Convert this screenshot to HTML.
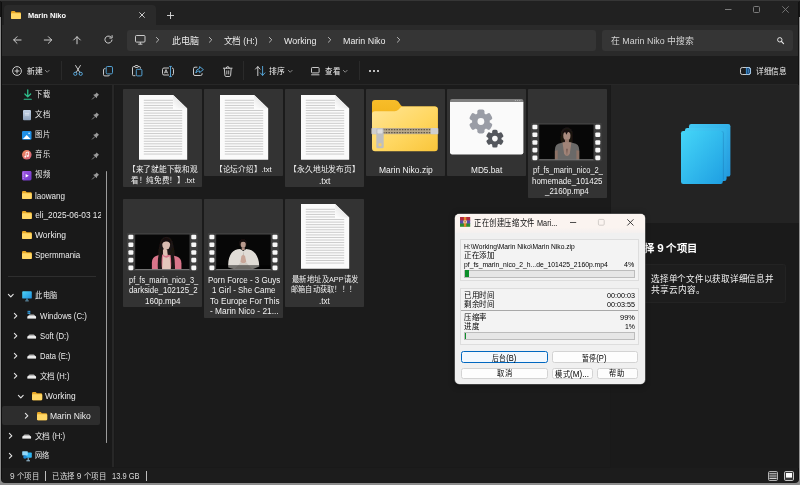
<!DOCTYPE html>
<html lang="zh-CN">
<head>
<meta charset="utf-8">
<title>Marin Niko</title>
<style>
*{box-sizing:border-box;margin:0;padding:0}
html,body{width:800px;height:485px;overflow:hidden;background:#191919}
body{font-family:"Liberation Sans",sans-serif;font-size:8px;color:#e6e6e6;position:relative}
.t{position:absolute;white-space:nowrap;transform-origin:0 50%;display:block}
svg{display:block;overflow:visible}
#w{position:absolute;left:0;top:0;width:800px;height:485px;overflow:hidden;will-change:transform}
.L{font-size:1.13em}

</style>
</head>
<body>
<div id="w">
<div style="position:absolute;left:0px;top:0px;width:800px;height:25px;background:#212121;"></div>
<div style="position:absolute;left:0px;top:0px;width:800px;height:1px;background:#363636;"></div>
<div style="position:absolute;left:0px;top:24.5px;width:800px;height:31.5px;background:#2a2a2a;"></div>
<div style="position:absolute;left:4.3px;top:4.6px;width:152px;height:21px;background:#2a2a2a;border-radius:4px 4px 0 0;"></div>
<div style="position:absolute;left:0px;top:56px;width:800px;height:28px;background:#1c1c1c;"></div>
<div style="position:absolute;left:0px;top:83.7px;width:800px;height:1.5px;background:#272727;"></div>
<svg style="position:absolute;left:11px;top:11px;" width="10" height="8" viewBox="0 0 10 8"><path d="M0 1.2Q0 0 1.2 0H3.6L4.8 1.3H8.8Q10 1.3 10 2.5V7Q10 8 9 8H1Q0 8 0 7Z" fill="#e8a827"/><path d="M0 2.9Q0 2.3 .8 2.3H9.2Q10 2.3 10 2.9V7Q10 8 9 8H1Q0 8 0 7Z" fill="#ffd767"/></svg>
<span id="t1" class="t" style="left:27.50px;top:9.60px;font-size:7.8px;color:#ffffff;line-height:12px;font-weight:bold;transform:scaleX(0.9534);">Marin Niko</span>
<svg style="position:absolute;left:139px;top:12px;" width="6" height="6" viewBox="0 0 6 6"><path d="M.3 .3L5.7 5.7M5.7 .3L.3 5.7" stroke="#dcdcdc" stroke-width=".9" fill="none"/></svg>
<svg style="position:absolute;left:167px;top:12px;" width="7" height="7" viewBox="0 0 7 7"><path d="M3.5 0V7M0 3.5H7" stroke="#dcdcdc" stroke-width=".9" fill="none"/></svg>
<svg style="position:absolute;left:725px;top:9px;" width="7" height="1" viewBox="0 0 7 1"><path d="M0 .5H6.5" stroke="#7c7c7c" stroke-width="1"/></svg>
<svg style="position:absolute;left:753px;top:6px;" width="7" height="7" viewBox="0 0 7 7"><rect x=".5" y=".5" width="6" height="6" rx="1" fill="none" stroke="#7c7c7c" stroke-width="1"/></svg>
<svg style="position:absolute;left:781.5px;top:6px;" width="7" height="7" viewBox="0 0 7 7"><path d="M.3 .3L6.7 6.7M6.7 .3L.3 6.7" stroke="#7c7c7c" stroke-width=".9" fill="none"/></svg>
<svg style="position:absolute;left:13.4px;top:35.6px;" width="8.4" height="8" viewBox="0 0 8.4 8"><path d="M8.1 4H.8M4 .7L.7 4L4 7.3" stroke="#d8d8d8" stroke-width=".95" fill="none" stroke-linecap="round" stroke-linejoin="round"/></svg>
<svg style="position:absolute;left:43.6px;top:35.6px;" width="8.4" height="8" viewBox="0 0 8.4 8"><path d="M.3 4H7.6M4.4 .7L7.7 4L4.4 7.3" stroke="#d8d8d8" stroke-width=".95" fill="none" stroke-linecap="round" stroke-linejoin="round"/></svg>
<svg style="position:absolute;left:73.3px;top:35.9px;" width="8" height="8" viewBox="0 0 8 8"><path d="M4 7.8V.8M.7 4L4 .7L7.3 4" stroke="#d8d8d8" stroke-width=".95" fill="none" stroke-linecap="round" stroke-linejoin="round"/></svg>
<svg style="position:absolute;left:103.5px;top:35.4px;" width="9" height="9" viewBox="0 0 9 9"><path d="M8 5A3.55 3.55 0 1 1 6.6 1.7" stroke="#d8d8d8" stroke-width=".95" fill="none" stroke-linecap="round"/><path d="M8.1 .6V3H5.7" stroke="#d8d8d8" stroke-width=".95" fill="none" stroke-linecap="round" stroke-linejoin="round"/></svg>
<div style="position:absolute;left:126.5px;top:29.5px;width:469.5px;height:21px;background:#353535;border-radius:3px;"></div>
<div style="position:absolute;left:601.5px;top:29.5px;width:191px;height:21px;background:#353535;border-radius:3px;"></div>
<svg style="position:absolute;left:134.5px;top:35px;" width="11" height="10" viewBox="0 0 11 10"><rect x=".5" y=".5" width="9.5" height="6.6" rx="1" fill="none" stroke="#dcdcdc" stroke-width=".9"/><path d="M3.2 9.2H7.4M5.3 7.2V9.2" stroke="#dcdcdc" stroke-width=".9" fill="none"/></svg>
<svg style="position:absolute;left:156.4px;top:37.4px;" width="3.2" height="5.6" viewBox="0 0 3.2 5.6"><path d="M.4 .4L2.8 2.8L.4 5.2" stroke="#cfcfcf" stroke-width="0.85" fill="none" stroke-linecap="round" stroke-linejoin="round"/></svg>
<svg style="position:absolute;left:209.4px;top:37.4px;" width="3.2" height="5.6" viewBox="0 0 3.2 5.6"><path d="M.4 .4L2.8 2.8L.4 5.2" stroke="#cfcfcf" stroke-width="0.85" fill="none" stroke-linecap="round" stroke-linejoin="round"/></svg>
<svg style="position:absolute;left:268.9px;top:37.4px;" width="3.2" height="5.6" viewBox="0 0 3.2 5.6"><path d="M.4 .4L2.8 2.8L.4 5.2" stroke="#cfcfcf" stroke-width="0.85" fill="none" stroke-linecap="round" stroke-linejoin="round"/></svg>
<svg style="position:absolute;left:327.9px;top:37.4px;" width="3.2" height="5.6" viewBox="0 0 3.2 5.6"><path d="M.4 .4L2.8 2.8L.4 5.2" stroke="#cfcfcf" stroke-width="0.85" fill="none" stroke-linecap="round" stroke-linejoin="round"/></svg>
<svg style="position:absolute;left:397.4px;top:37.4px;" width="3.2" height="5.6" viewBox="0 0 3.2 5.6"><path d="M.4 .4L2.8 2.8L.4 5.2" stroke="#cfcfcf" stroke-width="0.85" fill="none" stroke-linecap="round" stroke-linejoin="round"/></svg>
<span id="t2" class="t" style="left:172.00px;top:34.60px;font-size:9px;color:#ececec;line-height:12px;">此电脑</span>
<span id="t3" class="t" style="left:224.00px;top:34.60px;font-size:9px;color:#ececec;line-height:12px;transform:scaleX(0.9437);">文档 (H:)</span>
<span id="t4" class="t" style="left:283.75px;top:34.60px;font-size:9px;color:#ececec;line-height:12px;transform:scaleX(0.9891);">Working</span>
<span id="t5" class="t" style="left:343.00px;top:34.60px;font-size:9px;color:#ececec;line-height:12px;transform:scaleX(0.9880);">Marin Niko</span>
<span id="t6" class="t" style="left:610.80px;top:34.80px;font-size:9px;color:#d4d4d4;line-height:12px;transform:scaleX(0.9855);">在 Marin Niko 中搜索</span>
<svg style="position:absolute;left:776.5px;top:36.8px;" width="7" height="7" viewBox="0 0 7 7"><circle cx="2.8" cy="2.8" r="2.2" fill="none" stroke="#e4e4e4" stroke-width="1"/><path d="M4.5 4.5L6.6 6.6" stroke="#e4e4e4" stroke-width="1.1" stroke-linecap="round"/></svg>
<svg style="position:absolute;left:12px;top:66px;" width="10" height="10" viewBox="0 0 10 10"><circle cx="5" cy="5" r="4.4" fill="none" stroke="#dedede" stroke-width=".9"/><path d="M5 2.6V7.4M2.6 5H7.4" stroke="#dedede" stroke-width=".9"/></svg>
<span id="t7" class="t" style="left:27.00px;top:65.50px;font-size:8px;color:#f0f0f0;line-height:12px;transform:scaleX(0.9688);">新建</span>
<svg style="position:absolute;left:45px;top:70px;" width="4.4799999999999995" height="2.5600000000000005" viewBox="0 0 5.6 3.2"><path d="M.4 .4L2.8 2.8L5.2 .4" stroke="#bdbdbd" stroke-width="0.85" fill="none" stroke-linecap="round" stroke-linejoin="round"/></svg>
<div style="position:absolute;left:60.5px;top:61px;width:1px;height:19px;background:#2a2a2a;"></div>
<svg style="position:absolute;left:72.5px;top:65px;" width="10" height="11" viewBox="0 0 10 11"><path d="M2.6 .5L6.9 7.6M7.4 .5L3.1 7.6" stroke="#dedede" stroke-width=".9" fill="none" stroke-linecap="round"/><circle cx="2.3" cy="8.8" r="1.6" fill="none" stroke="#5ab0e6" stroke-width=".9"/><circle cx="7.7" cy="8.8" r="1.6" fill="none" stroke="#5ab0e6" stroke-width=".9"/></svg>
<svg style="position:absolute;left:102.5px;top:65.5px;" width="10" height="10.5" viewBox="0 0 10 10.5"><rect x="3.2" y=".5" width="6.3" height="7.4" rx="1.3" fill="none" stroke="#5ab0e6" stroke-width=".9"/><path d="M2.4 2.6H1.8Q.5 2.6 .5 3.9V8.6Q.5 9.9 1.8 9.9H5.2Q6.5 9.9 6.5 8.9" fill="none" stroke="#dedede" stroke-width=".9"/></svg>
<svg style="position:absolute;left:132px;top:65px;" width="10.5" height="11.5" viewBox="0 0 10.5 11.5"><path d="M3 1.6H1.6Q.5 1.6 .5 2.7V9.6Q.5 10.7 1.6 10.7H3.4" fill="none" stroke="#dedede" stroke-width=".9"/><path d="M6 1.6H7.4Q8.4 1.6 8.4 2.6V3.6" fill="none" stroke="#dedede" stroke-width=".9"/><rect x="2.9" y=".5" width="3.2" height="2" rx=".8" fill="none" stroke="#dedede" stroke-width=".9"/><rect x="4.3" y="4.3" width="5.6" height="6.6" rx="1" fill="none" stroke="#5ab0e6" stroke-width=".9"/></svg>
<svg style="position:absolute;left:161.5px;top:65.5px;" width="12" height="11" viewBox="0 0 12 11"><path d="M7 2H2Q.5 2 .5 3.5V7.5Q.5 9 2 9H7" fill="none" stroke="#dedede" stroke-width=".9"/><path d="M10 2Q11.5 2 11.5 3.5V7.5Q11.5 9 10 9" fill="none" stroke="#dedede" stroke-width=".9"/><path d="M8.5 .4V10.6M7.2 .4H9.8M7.2 10.6H9.8" stroke="#5ab0e6" stroke-width=".9" fill="none"/><path d="M2.4 7.3L4 3.6L5.6 7.3M2.9 6.2H5.1" stroke="#dedede" stroke-width=".8" fill="none"/></svg>
<svg style="position:absolute;left:192.8px;top:66px;" width="11" height="10" viewBox="0 0 11 10"><path d="M4.4 1.2H2Q.5 1.2 .5 2.7V8Q.5 9.5 2 9.5H7.6Q9.1 9.5 9.1 8V7.2" fill="none" stroke="#dedede" stroke-width=".9"/><path d="M6.6 .6L10.4 3.6L6.6 6.6V4.9Q4 4.7 2.8 7Q3 3 6.6 2.4Z" fill="none" stroke="#5ab0e6" stroke-width=".9" stroke-linejoin="round"/></svg>
<svg style="position:absolute;left:222.5px;top:65.5px;" width="9.5" height="11" viewBox="0 0 9.5 11"><path d="M.4 2.2H9.1M3.3 2.2Q3.3 .5 4.75 .5Q6.2 .5 6.2 2.2" fill="none" stroke="#dedede" stroke-width=".9" stroke-linecap="round"/><path d="M1.3 2.4L1.9 9.4Q2 10.5 3.1 10.5H6.4Q7.5 10.5 7.6 9.4L8.2 2.4" fill="none" stroke="#dedede" stroke-width=".9"/><path d="M3.8 4.4V8.4M5.7 4.4V8.4" stroke="#dedede" stroke-width=".8"/></svg>
<div style="position:absolute;left:242.5px;top:61px;width:1px;height:19px;background:#2a2a2a;"></div>
<svg style="position:absolute;left:254.5px;top:66px;" width="10.5" height="10" viewBox="0 0 10.5 10"><path d="M2.8 9.6V.8M.5 3.1L2.8 .6L5.1 3.1" fill="none" stroke="#dedede" stroke-width=".9" stroke-linecap="round" stroke-linejoin="round"/><path d="M7.6 .4V9.2M5.3 6.9L7.6 9.4L9.9 6.9" fill="none" stroke="#5ab0e6" stroke-width=".9" stroke-linecap="round" stroke-linejoin="round"/></svg>
<span id="t8" class="t" style="left:269.00px;top:65.50px;font-size:8px;color:#f0f0f0;line-height:12px;transform:scaleX(0.9688);">排序</span>
<svg style="position:absolute;left:288px;top:70px;" width="4.4799999999999995" height="2.5600000000000005" viewBox="0 0 5.6 3.2"><path d="M.4 .4L2.8 2.8L5.2 .4" stroke="#bdbdbd" stroke-width="0.85" fill="none" stroke-linecap="round" stroke-linejoin="round"/></svg>
<svg style="position:absolute;left:311px;top:66.5px;" width="9" height="8.5" viewBox="0 0 9 8.5"><rect x=".5" y=".5" width="7.6" height="5.4" rx=".8" fill="none" stroke="#dedede" stroke-width=".9"/><path d="M.2 7.8H8.4" stroke="#dedede" stroke-width=".9"/></svg>
<span id="t9" class="t" style="left:325.00px;top:65.50px;font-size:8px;color:#f0f0f0;line-height:12px;transform:scaleX(0.9375);">查看</span>
<svg style="position:absolute;left:343.3px;top:70px;" width="4.4799999999999995" height="2.5600000000000005" viewBox="0 0 5.6 3.2"><path d="M.4 .4L2.8 2.8L5.2 .4" stroke="#bdbdbd" stroke-width="0.85" fill="none" stroke-linecap="round" stroke-linejoin="round"/></svg>
<div style="position:absolute;left:358.5px;top:61px;width:1px;height:19px;background:#2a2a2a;"></div>
<div style="position:absolute;left:369.2px;top:70.3px;width:1.6px;height:1.6px;background:#f0f0f0;border-radius:1px;"></div>
<div style="position:absolute;left:373.2px;top:70.3px;width:1.6px;height:1.6px;background:#f0f0f0;border-radius:1px;"></div>
<div style="position:absolute;left:377.2px;top:70.3px;width:1.6px;height:1.6px;background:#f0f0f0;border-radius:1px;"></div>
<svg style="position:absolute;left:740px;top:67px;" width="11" height="8" viewBox="0 0 11 8"><path d="M6.4 .5H8.8Q10.5 .5 10.5 2.2V5.8Q10.5 7.5 8.8 7.5H6.4Z" fill="#1d4f80"/><rect x=".5" y=".5" width="10" height="7" rx="1.8" fill="none" stroke="#dedede" stroke-width=".9"/><path d="M6.4 .6V7.4" stroke="#3f97dc" stroke-width=".9"/><path d="M8.5 2.2V5.8" stroke="#4c8fc8" stroke-width=".7"/><path d="M6.4 .5H8.8Q10.5 .5 10.5 2.2V5.8Q10.5 7.5 8.8 7.5H6.4" fill="none" stroke="#9cc4e6" stroke-width=".9"/></svg>
<span id="t10" class="t" style="left:755.60px;top:65.50px;font-size:8px;color:#f0f0f0;line-height:12px;transform:scaleX(0.9594);">详细信息</span>
<div style="position:absolute;left:111.8px;top:85px;width:2.2px;height:382px;background:#272727;"></div>
<div style="position:absolute;left:115.3px;top:85.2px;width:495px;height:382px;background:#1b1b1b;"></div>
<svg style="position:absolute;left:23.5px;top:90px;" width="7.5" height="10" viewBox="0 0 7.5 10"><path d="M3.75 0V6.6M.9 4L3.75 6.9L6.6 4" fill="none" stroke="#2fc08d" stroke-width="1.3" stroke-linecap="round" stroke-linejoin="round"/><path d="M.2 9.3H7.3" stroke="#2fc08d" stroke-width="1.1" stroke-linecap="round"/></svg>
<span id="t11" class="t" style="left:35.00px;top:89.30px;font-size:7.7px;color:#ececec;line-height:12px;transform:scaleX(0.9500);">下载</span>
<svg style="position:absolute;left:92px;top:91.7px;" width="7.5" height="7.5" viewBox="0 0 7.5 7.5"><path d="M4.6 .4L7.1 2.9L6.3 3.3L5.2 4.4L4.7 6.3L1.2 2.8L3.1 2.3L4.2 1.2Z" fill="#9b9b9b"/><path d="M2.7 4.8L.4 7.1" stroke="#9b9b9b" stroke-width=".9" stroke-linecap="round"/></svg>
<svg style="position:absolute;left:23px;top:110px;" width="8" height="10.3" viewBox="0 0 8 10.3"><defs><linearGradient id="gd" x1="0" y1="0" x2="0" y2="1"><stop offset="0" stop-color="#c4d3e6"/><stop offset="1" stop-color="#8fa3bd"/></linearGradient></defs><rect x="0" y="0" width="8" height="10.3" rx="1" fill="url(#gd)"/><path d="M1.8 3.3H6.2M1.8 5H6.2" stroke="#e9eff7" stroke-width=".7"/></svg>
<span id="t12" class="t" style="left:35.00px;top:109.30px;font-size:7.7px;color:#ececec;line-height:12px;transform:scaleX(0.9500);">文档</span>
<svg style="position:absolute;left:92px;top:111.7px;" width="7.5" height="7.5" viewBox="0 0 7.5 7.5"><path d="M4.6 .4L7.1 2.9L6.3 3.3L5.2 4.4L4.7 6.3L1.2 2.8L3.1 2.3L4.2 1.2Z" fill="#9b9b9b"/><path d="M2.7 4.8L.4 7.1" stroke="#9b9b9b" stroke-width=".9" stroke-linecap="round"/></svg>
<svg style="position:absolute;left:22px;top:131px;" width="9.5" height="8.8" viewBox="0 0 9.5 8.8"><rect width="9.5" height="8.8" rx="1.2" fill="#1f8fe6"/><path d="M.9 7.9L4.7 3.9L8.6 7.9Z" fill="#ffffff"/><circle cx="7.1" cy="2.3" r=".9" fill="#bfe4ff"/></svg>
<span id="t13" class="t" style="left:35.00px;top:129.30px;font-size:7.7px;color:#ececec;line-height:12px;transform:scaleX(0.9500);">图片</span>
<svg style="position:absolute;left:92px;top:131.7px;" width="7.5" height="7.5" viewBox="0 0 7.5 7.5"><path d="M4.6 .4L7.1 2.9L6.3 3.3L5.2 4.4L4.7 6.3L1.2 2.8L3.1 2.3L4.2 1.2Z" fill="#9b9b9b"/><path d="M2.7 4.8L.4 7.1" stroke="#9b9b9b" stroke-width=".9" stroke-linecap="round"/></svg>
<svg style="position:absolute;left:22px;top:150.3px;" width="9.6" height="9.6" viewBox="0 0 9.6 9.6"><defs><linearGradient id="gm" x1="0" y1="0" x2="1" y2="1"><stop offset="0" stop-color="#f08a5a"/><stop offset="1" stop-color="#d2607f"/></linearGradient></defs><circle cx="4.8" cy="4.8" r="4.8" fill="url(#gm)"/><path d="M4 6.6V2.6L6.6 2V5.8" fill="none" stroke="#fff" stroke-width=".8"/><circle cx="3.3" cy="6.7" r=".9" fill="#fff"/><circle cx="5.9" cy="6" r=".9" fill="#fff"/></svg>
<span id="t14" class="t" style="left:35.00px;top:149.30px;font-size:7.7px;color:#ececec;line-height:12px;transform:scaleX(0.9500);">音乐</span>
<svg style="position:absolute;left:92px;top:151.7px;" width="7.5" height="7.5" viewBox="0 0 7.5 7.5"><path d="M4.6 .4L7.1 2.9L6.3 3.3L5.2 4.4L4.7 6.3L1.2 2.8L3.1 2.3L4.2 1.2Z" fill="#9b9b9b"/><path d="M2.7 4.8L.4 7.1" stroke="#9b9b9b" stroke-width=".9" stroke-linecap="round"/></svg>
<svg style="position:absolute;left:22px;top:170.7px;" width="9.5" height="9.5" viewBox="0 0 9.5 9.5"><defs><linearGradient id="gv" x1="0" y1="0" x2="1" y2="1"><stop offset="0" stop-color="#a55be6"/><stop offset="1" stop-color="#6a34c4"/></linearGradient></defs><rect width="9.5" height="9.5" rx="1.4" fill="url(#gv)"/><path d="M3.6 2.9L6.8 4.75L3.6 6.6Z" fill="#fff"/><path d="M1.3 1.6V7.9" stroke="#d9bdf7" stroke-width=".7" stroke-dasharray="1 .8"/></svg>
<span id="t15" class="t" style="left:35.00px;top:169.40px;font-size:7.7px;color:#ececec;line-height:12px;transform:scaleX(0.9500);">视频</span>
<svg style="position:absolute;left:92px;top:171.7px;" width="7.5" height="7.5" viewBox="0 0 7.5 7.5"><path d="M4.6 .4L7.1 2.9L6.3 3.3L5.2 4.4L4.7 6.3L1.2 2.8L3.1 2.3L4.2 1.2Z" fill="#9b9b9b"/><path d="M2.7 4.8L.4 7.1" stroke="#9b9b9b" stroke-width=".9" stroke-linecap="round"/></svg>
<svg style="position:absolute;left:22px;top:191.3px;" width="9.8" height="8" viewBox="0 0 10 8"><path d="M0 1.2Q0 0 1.2 0H3.6L4.8 1.3H8.8Q10 1.3 10 2.5V7Q10 8 9 8H1Q0 8 0 7Z" fill="#e8a827"/><path d="M0 2.9Q0 2.3 .8 2.3H9.2Q10 2.3 10 2.9V7Q10 8 9 8H1Q0 8 0 7Z" fill="#ffd767"/></svg>
<span id="t16" class="t" style="left:35.20px;top:189.50px;font-size:8.3px;color:#ececec;line-height:12px;transform:scaleX(0.9734);">laowang</span>
<svg style="position:absolute;left:22px;top:211.3px;" width="9.8" height="8" viewBox="0 0 10 8"><path d="M0 1.2Q0 0 1.2 0H3.6L4.8 1.3H8.8Q10 1.3 10 2.5V7Q10 8 9 8H1Q0 8 0 7Z" fill="#e8a827"/><path d="M0 2.9Q0 2.3 .8 2.3H9.2Q10 2.3 10 2.9V7Q10 8 9 8H1Q0 8 0 7Z" fill="#ffd767"/></svg>
<span id="t17" class="t" style="left:35.20px;top:209.40px;font-size:8.3px;color:#ececec;line-height:12px;width:66px;overflow:hidden;">eli_2025-06-03 12l</span>
<svg style="position:absolute;left:22px;top:231.3px;" width="9.8" height="8" viewBox="0 0 10 8"><path d="M0 1.2Q0 0 1.2 0H3.6L4.8 1.3H8.8Q10 1.3 10 2.5V7Q10 8 9 8H1Q0 8 0 7Z" fill="#e8a827"/><path d="M0 2.9Q0 2.3 .8 2.3H9.2Q10 2.3 10 2.9V7Q10 8 9 8H1Q0 8 0 7Z" fill="#ffd767"/></svg>
<span id="t18" class="t" style="left:35.20px;top:229.30px;font-size:8.3px;color:#ececec;line-height:12px;transform:scaleX(1.0237);">Working</span>
<svg style="position:absolute;left:22px;top:251.3px;" width="9.8" height="8" viewBox="0 0 10 8"><path d="M0 1.2Q0 0 1.2 0H3.6L4.8 1.3H8.8Q10 1.3 10 2.5V7Q10 8 9 8H1Q0 8 0 7Z" fill="#e8a827"/><path d="M0 2.9Q0 2.3 .8 2.3H9.2Q10 2.3 10 2.9V7Q10 8 9 8H1Q0 8 0 7Z" fill="#ffd767"/></svg>
<span id="t19" class="t" style="left:35.20px;top:249.40px;font-size:8.3px;color:#ececec;line-height:12px;transform:scaleX(0.9629);">Spermmania</span>
<div style="position:absolute;left:8px;top:276px;width:87.5px;height:1px;background:#2e2e2e;"></div>
<div style="position:absolute;left:105.8px;top:171px;width:1px;height:272px;background:#9c9c9c;border-radius:1px;"></div>
<svg style="position:absolute;left:8px;top:293.8px;" width="5.6" height="3.2" viewBox="0 0 5.6 3.2"><path d="M.4 .4L2.8 2.8L5.2 .4" stroke="#e4e4e4" stroke-width="1.15" fill="none" stroke-linecap="round" stroke-linejoin="round"/></svg>
<svg style="position:absolute;left:22px;top:290.8px;" width="10" height="10.5" viewBox="0 0 10 10.5"><defs><linearGradient id="gpc" x1="0" y1="0" x2="1" y2="1"><stop offset="0" stop-color="#4fd4f7"/><stop offset="1" stop-color="#1e8fdc"/></linearGradient></defs><rect x=".2" y=".2" width="9.6" height="7.4" rx=".9" fill="url(#gpc)"/><path d="M3.2 9.9H6.8" stroke="#7fb2cf" stroke-width=".8"/><path d="M5 7.6V9.6" stroke="#4e9cc4" stroke-width="1.4"/></svg>
<span id="t20" class="t" style="left:35.20px;top:289.50px;font-size:7.7px;color:#ececec;line-height:12px;transform:scaleX(0.9417);">此电脑</span>
<svg style="position:absolute;left:14.2px;top:312.8px;" width="3.2" height="5.6" viewBox="0 0 3.2 5.6"><path d="M.4 .4L2.8 2.8L.4 5.2" stroke="#e4e4e4" stroke-width="1.15" fill="none" stroke-linecap="round" stroke-linejoin="round"/></svg>
<svg style="position:absolute;left:27.3px;top:313.70000000000005px;" width="9.4" height="5" viewBox="0 0 9.4 5"><rect x=".6" y="-3.2" width="1.2" height="1.5" fill="#35a8f0"/><rect x="2.1" y="-3.2" width="1.2" height="1.5" fill="#35a8f0"/><rect x=".6" y="-1.5" width="1.2" height="1.5" fill="#35a8f0"/><rect x="2.1" y="-1.5" width="1.2" height="1.5" fill="#35a8f0"/><path d="M.9 2.3L1.9 1Q2.2 .6 2.8 .6H6.6Q7.2 .6 7.5 1L8.5 2.3Z" fill="#b9b9b9"/><rect x=".3" y="2.1" width="8.8" height="2.7" rx=".8" fill="#ececec"/><rect x=".6" y="4.1" width="8.2" height=".8" rx=".4" fill="#9a9a9a"/></svg>
<span id="t21" class="t" style="left:40.40px;top:309.70px;font-size:8.3px;color:#ececec;line-height:12px;transform:scaleX(0.9418);">Windows (C:)</span>
<svg style="position:absolute;left:14.2px;top:332.8px;" width="3.2" height="5.6" viewBox="0 0 3.2 5.6"><path d="M.4 .4L2.8 2.8L.4 5.2" stroke="#e4e4e4" stroke-width="1.15" fill="none" stroke-linecap="round" stroke-linejoin="round"/></svg>
<svg style="position:absolute;left:27.3px;top:333.70000000000005px;" width="9.4" height="5" viewBox="0 0 9.4 5"><path d="M.9 2.3L1.9 1Q2.2 .6 2.8 .6H6.6Q7.2 .6 7.5 1L8.5 2.3Z" fill="#b9b9b9"/><rect x=".3" y="2.1" width="8.8" height="2.7" rx=".8" fill="#ececec"/><rect x=".6" y="4.1" width="8.2" height=".8" rx=".4" fill="#9a9a9a"/></svg>
<span id="t22" class="t" style="left:40.40px;top:329.70px;font-size:8.3px;color:#ececec;line-height:12px;transform:scaleX(0.9323);">Soft (D:)</span>
<svg style="position:absolute;left:14.2px;top:353.2px;" width="3.2" height="5.6" viewBox="0 0 3.2 5.6"><path d="M.4 .4L2.8 2.8L.4 5.2" stroke="#e4e4e4" stroke-width="1.15" fill="none" stroke-linecap="round" stroke-linejoin="round"/></svg>
<svg style="position:absolute;left:27.3px;top:354.1px;" width="9.4" height="5" viewBox="0 0 9.4 5"><path d="M.9 2.3L1.9 1Q2.2 .6 2.8 .6H6.6Q7.2 .6 7.5 1L8.5 2.3Z" fill="#b9b9b9"/><rect x=".3" y="2.1" width="8.8" height="2.7" rx=".8" fill="#ececec"/><rect x=".6" y="4.1" width="8.2" height=".8" rx=".4" fill="#9a9a9a"/></svg>
<span id="t23" class="t" style="left:40.40px;top:350.10px;font-size:8.3px;color:#ececec;line-height:12px;transform:scaleX(0.9156);">Data (E:)</span>
<svg style="position:absolute;left:14.2px;top:373.2px;" width="3.2" height="5.6" viewBox="0 0 3.2 5.6"><path d="M.4 .4L2.8 2.8L.4 5.2" stroke="#e4e4e4" stroke-width="1.15" fill="none" stroke-linecap="round" stroke-linejoin="round"/></svg>
<svg style="position:absolute;left:27.3px;top:374.1px;" width="9.4" height="5" viewBox="0 0 9.4 5"><path d="M.9 2.3L1.9 1Q2.2 .6 2.8 .6H6.6Q7.2 .6 7.5 1L8.5 2.3Z" fill="#b9b9b9"/><rect x=".3" y="2.1" width="8.8" height="2.7" rx=".8" fill="#ececec"/><rect x=".6" y="4.1" width="8.2" height=".8" rx=".4" fill="#9a9a9a"/></svg>
<span id="t24" class="t" style="left:40.40px;top:370.10px;font-size:8.3px;color:#ececec;line-height:12px;transform:scaleX(0.9178);">文档 (H:)</span>
<svg style="position:absolute;left:18.2px;top:394.5px;" width="5.6" height="3.2" viewBox="0 0 5.6 3.2"><path d="M.4 .4L2.8 2.8L5.2 .4" stroke="#e4e4e4" stroke-width="1.15" fill="none" stroke-linecap="round" stroke-linejoin="round"/></svg>
<svg style="position:absolute;left:31.8px;top:391.8px;" width="10.2" height="8.2" viewBox="0 0 10 8"><path d="M0 1.2Q0 0 1.2 0H3.6L4.8 1.3H8.8Q10 1.3 10 2.5V7Q10 8 9 8H1Q0 8 0 7Z" fill="#e8a827"/><path d="M0 2.9Q0 2.3 .8 2.3H9.2Q10 2.3 10 2.9V7Q10 8 9 8H1Q0 8 0 7Z" fill="#ffd767"/></svg>
<span id="t25" class="t" style="left:45.40px;top:390.00px;font-size:8.3px;color:#ececec;line-height:12px;transform:scaleX(1.0105);">Working</span>
<div style="position:absolute;left:2.3px;top:406.3px;width:98.2px;height:19.2px;background:#2d2d2d;border-radius:2px;"></div>
<svg style="position:absolute;left:24.6px;top:413.2px;" width="3.2" height="5.6" viewBox="0 0 3.2 5.6"><path d="M.4 .4L2.8 2.8L.4 5.2" stroke="#e4e4e4" stroke-width="1.15" fill="none" stroke-linecap="round" stroke-linejoin="round"/></svg>
<svg style="position:absolute;left:37px;top:412px;" width="10.2" height="8.2" viewBox="0 0 10 8"><path d="M0 1.2Q0 0 1.2 0H3.6L4.8 1.3H8.8Q10 1.3 10 2.5V7Q10 8 9 8H1Q0 8 0 7Z" fill="#e8a827"/><path d="M0 2.9Q0 2.3 .8 2.3H9.2Q10 2.3 10 2.9V7Q10 8 9 8H1Q0 8 0 7Z" fill="#ffd767"/></svg>
<span id="t26" class="t" style="left:50.40px;top:410.10px;font-size:8.3px;color:#ececec;line-height:12px;transform:scaleX(1.0288);">Marin Niko</span>
<svg style="position:absolute;left:9.3px;top:433px;" width="3.2" height="5.6" viewBox="0 0 3.2 5.6"><path d="M.4 .4L2.8 2.8L.4 5.2" stroke="#e4e4e4" stroke-width="1.15" fill="none" stroke-linecap="round" stroke-linejoin="round"/></svg>
<svg style="position:absolute;left:22.2px;top:433.9px;" width="9.4" height="5" viewBox="0 0 9.4 5"><path d="M.9 2.3L1.9 1Q2.2 .6 2.8 .6H6.6Q7.2 .6 7.5 1L8.5 2.3Z" fill="#b9b9b9"/><rect x=".3" y="2.1" width="8.8" height="2.7" rx=".8" fill="#ececec"/><rect x=".6" y="4.1" width="8.2" height=".8" rx=".4" fill="#9a9a9a"/></svg>
<span id="t27" class="t" style="left:35.20px;top:429.90px;font-size:8.3px;color:#ececec;line-height:12px;transform:scaleX(0.9365);">文档 (H:)</span>
<svg style="position:absolute;left:9.3px;top:453.2px;" width="3.2" height="5.6" viewBox="0 0 3.2 5.6"><path d="M.4 .4L2.8 2.8L.4 5.2" stroke="#e4e4e4" stroke-width="1.15" fill="none" stroke-linecap="round" stroke-linejoin="round"/></svg>
<svg style="position:absolute;left:22px;top:450.5px;" width="10" height="10.5" viewBox="0 0 10 10.5"><rect x="2.6" y="1.6" width="7.2" height="5.2" rx=".7" fill="#2fb4f0"/><rect x=".2" y=".2" width="5.6" height="4.2" rx=".6" fill="#8fd6f7"/><path d="M4.4 9.8H8M6.2 6.8V9.6" stroke="#9ec7de" stroke-width="1"/><circle cx="3" cy="6" r="1.8" fill="#1e8ad6"/></svg>
<span id="t28" class="t" style="left:35.20px;top:450.10px;font-size:7.7px;color:#ececec;line-height:12px;transform:scaleX(0.9250);">网络</span>
<div style="position:absolute;left:0px;top:467.5px;width:800px;height:15px;background:#1c1c1c;"></div>
<span id="t29" class="t" style="left:9.50px;top:470.20px;font-size:7.8px;color:#dadada;line-height:12px;transform:scaleX(0.9412);"><span class="L">9</span> 个项目</span>
<div style="position:absolute;left:45px;top:471px;width:1px;height:10px;background:#bdbdbd;"></div>
<span id="t30" class="t" style="left:52.00px;top:470.20px;font-size:7.8px;color:#dadada;line-height:12px;transform:scaleX(0.9476);">已选择 <span class="L">9</span> 个项目</span>
<span id="t31" class="t" style="left:112.00px;top:470.20px;font-size:7.8px;color:#dadada;line-height:12px;transform:scaleX(0.8519);"><span class="L">13.9 GB</span></span>
<div style="position:absolute;left:146px;top:471px;width:1px;height:10px;background:#bdbdbd;"></div>
<svg style="position:absolute;left:767.5px;top:471.2px;" width="10" height="10" viewBox="0 0 10 10"><rect x=".5" y=".5" width="9" height="9" rx="1.2" fill="#2e2e2e" stroke="#c4c4c4" stroke-width=".9"/><path d="M1.4 2.7H8.6M1.4 5H8.6M1.4 7.3H8.6" stroke="#cfcfcf" stroke-width="1.15"/></svg>
<svg style="position:absolute;left:783.8px;top:471.1px;" width="10" height="10" viewBox="0 0 10 10"><rect x=".5" y=".5" width="9" height="9" rx="1.2" fill="#3a3a3a" stroke="#d8d8d8" stroke-width=".9"/><rect x="2" y="2" width="6" height="4.6" fill="#ffffff"/></svg>
<div style="position:absolute;left:0px;top:482.6px;width:800px;height:1px;background:#0e0e0e;"></div>
<div style="position:absolute;left:0px;top:483.4px;width:800px;height:1.6px;background:#8c8c8c;"></div>
<div style="position:absolute;left:0px;top:17px;width:1px;height:468px;background:#8c8c8c;"></div>
<div style="position:absolute;left:0.9px;top:2px;width:0.8px;height:481px;background:#0e0e0e;"></div>
<div style="position:absolute;left:0px;top:1px;width:1px;height:16px;background:#161616;"></div>
<div style="position:absolute;left:798.9px;top:17px;width:1.1px;height:468px;background:#949494;"></div>
<div style="position:absolute;left:798.2px;top:2px;width:0.8px;height:481px;background:#111111;"></div>
<div style="position:absolute;left:798.9px;top:1px;width:1.1px;height:16px;background:#161616;"></div>
<svg style="position:absolute;left:0px;top:478.6px;" width="5" height="5" viewBox="0 0 5 5"><path d="M0 0H1Q1 4 5 4V5H0Z" fill="#8c8c8c"/></svg>
<svg style="position:absolute;left:795px;top:478.6px;" width="5" height="5" viewBox="0 0 5 5"><path d="M5 0H4Q4 4 0 4V5H5Z" fill="#8c8c8c"/></svg>
<div style="position:absolute;left:123px;top:88.75px;width:79.4px;height:98.25px;background:#333333;border-radius:.8px;"></div>
<svg style="position:absolute;left:138.8px;top:94.5px;" width="48.2" height="64.8" viewBox="0 0 48.2 64.8"><defs><linearGradient id="gf138" x1="0" y1="1" x2="1" y2="0"><stop offset="0" stop-color="#ffffff"/><stop offset="1" stop-color="#d4d4d4"/></linearGradient></defs><path d="M0 0H34.2L48.2 13.4V64.8H0Z" fill="#fbfbfb"/><path d="M4.8 5.30H34.0" stroke="#cbcbcb" stroke-width="1.0"/><path d="M4.8 7.86H34.0" stroke="#cbcbcb" stroke-width="1.0"/><path d="M4.8 10.42H34.0" stroke="#cbcbcb" stroke-width="1.0"/><path d="M4.8 12.98H34.0" stroke="#cbcbcb" stroke-width="1.0"/><path d="M4.8 15.54H43.2" stroke="#cbcbcb" stroke-width="1.0"/><path d="M4.8 18.10H43.2" stroke="#cbcbcb" stroke-width="1.0"/><path d="M4.8 20.66H43.2" stroke="#cbcbcb" stroke-width="1.0"/><path d="M4.8 23.22H43.2" stroke="#cbcbcb" stroke-width="1.0"/><path d="M4.8 25.78H43.2" stroke="#cbcbcb" stroke-width="1.0"/><path d="M4.8 28.34H43.2" stroke="#cbcbcb" stroke-width="1.0"/><path d="M4.8 30.90H43.2" stroke="#cbcbcb" stroke-width="1.0"/><path d="M4.8 33.46H43.2" stroke="#cbcbcb" stroke-width="1.0"/><path d="M4.8 36.02H43.2" stroke="#cbcbcb" stroke-width="1.0"/><path d="M4.8 38.58H43.2" stroke="#cbcbcb" stroke-width="1.0"/><path d="M4.8 41.14H43.2" stroke="#cbcbcb" stroke-width="1.0"/><path d="M4.8 43.70H43.2" stroke="#cbcbcb" stroke-width="1.0"/><path d="M4.8 46.26H43.2" stroke="#cbcbcb" stroke-width="1.0"/><path d="M4.8 48.82H43.2" stroke="#cbcbcb" stroke-width="1.0"/><path d="M4.8 51.38H43.2" stroke="#cbcbcb" stroke-width="1.0"/><path d="M4.8 53.94H43.2" stroke="#cbcbcb" stroke-width="1.0"/><path d="M4.8 56.50H43.2" stroke="#cbcbcb" stroke-width="1.0"/><path d="M4.8 59.06H43.2" stroke="#cbcbcb" stroke-width="1.0"/><path d="M34.2 0L48.2 13.4H35.4Q34.2 13.4 34.2 12.2Z" fill="url(#gf138)"/></svg>
<span id="t32" class="t" style="left:127.70px;top:163.50px;font-size:7.9px;color:#f2f2f2;line-height:12px;transform:scaleX(0.9667);">【来了就能下载和观</span>
<span id="t33" class="t" style="left:130.75px;top:174.50px;font-size:7.9px;color:#f2f2f2;line-height:12px;transform:scaleX(0.9582);">看！纯免费！】.txt</span>
<div style="position:absolute;left:204px;top:88.75px;width:79.4px;height:87.5px;background:#333333;border-radius:.8px;"></div>
<svg style="position:absolute;left:219.9px;top:94.5px;" width="48.2" height="64.8" viewBox="0 0 48.2 64.8"><defs><linearGradient id="gf219" x1="0" y1="1" x2="1" y2="0"><stop offset="0" stop-color="#ffffff"/><stop offset="1" stop-color="#d4d4d4"/></linearGradient></defs><path d="M0 0H34.2L48.2 13.4V64.8H0Z" fill="#fbfbfb"/><path d="M4.8 5.30H34.0" stroke="#cbcbcb" stroke-width="1.0"/><path d="M4.8 7.86H34.0" stroke="#cbcbcb" stroke-width="1.0"/><path d="M4.8 10.42H34.0" stroke="#cbcbcb" stroke-width="1.0"/><path d="M4.8 12.98H34.0" stroke="#cbcbcb" stroke-width="1.0"/><path d="M4.8 15.54H43.2" stroke="#cbcbcb" stroke-width="1.0"/><path d="M4.8 18.10H43.2" stroke="#cbcbcb" stroke-width="1.0"/><path d="M4.8 20.66H43.2" stroke="#cbcbcb" stroke-width="1.0"/><path d="M4.8 23.22H43.2" stroke="#cbcbcb" stroke-width="1.0"/><path d="M4.8 25.78H43.2" stroke="#cbcbcb" stroke-width="1.0"/><path d="M4.8 28.34H43.2" stroke="#cbcbcb" stroke-width="1.0"/><path d="M4.8 30.90H43.2" stroke="#cbcbcb" stroke-width="1.0"/><path d="M4.8 33.46H43.2" stroke="#cbcbcb" stroke-width="1.0"/><path d="M4.8 36.02H43.2" stroke="#cbcbcb" stroke-width="1.0"/><path d="M4.8 38.58H43.2" stroke="#cbcbcb" stroke-width="1.0"/><path d="M4.8 41.14H43.2" stroke="#cbcbcb" stroke-width="1.0"/><path d="M4.8 43.70H43.2" stroke="#cbcbcb" stroke-width="1.0"/><path d="M4.8 46.26H43.2" stroke="#cbcbcb" stroke-width="1.0"/><path d="M4.8 48.82H43.2" stroke="#cbcbcb" stroke-width="1.0"/><path d="M4.8 51.38H43.2" stroke="#cbcbcb" stroke-width="1.0"/><path d="M4.8 53.94H43.2" stroke="#cbcbcb" stroke-width="1.0"/><path d="M4.8 56.50H43.2" stroke="#cbcbcb" stroke-width="1.0"/><path d="M4.8 59.06H43.2" stroke="#cbcbcb" stroke-width="1.0"/><path d="M34.2 0L48.2 13.4H35.4Q34.2 13.4 34.2 12.2Z" fill="url(#gf219)"/></svg>
<span id="t34" class="t" style="left:215.30px;top:163.50px;font-size:7.9px;color:#f2f2f2;line-height:12px;transform:scaleX(0.9687);">【论坛介绍】.txt</span>
<div style="position:absolute;left:285px;top:88.75px;width:79.4px;height:98.25px;background:#333333;border-radius:.8px;"></div>
<svg style="position:absolute;left:300.6px;top:94.5px;" width="48.2" height="64.8" viewBox="0 0 48.2 64.8"><defs><linearGradient id="gf300" x1="0" y1="1" x2="1" y2="0"><stop offset="0" stop-color="#ffffff"/><stop offset="1" stop-color="#d4d4d4"/></linearGradient></defs><path d="M0 0H34.2L48.2 13.4V64.8H0Z" fill="#fbfbfb"/><path d="M4.8 5.30H34.0" stroke="#cbcbcb" stroke-width="1.0"/><path d="M4.8 7.86H34.0" stroke="#cbcbcb" stroke-width="1.0"/><path d="M4.8 10.42H34.0" stroke="#cbcbcb" stroke-width="1.0"/><path d="M4.8 12.98H34.0" stroke="#cbcbcb" stroke-width="1.0"/><path d="M4.8 15.54H43.2" stroke="#cbcbcb" stroke-width="1.0"/><path d="M4.8 18.10H43.2" stroke="#cbcbcb" stroke-width="1.0"/><path d="M4.8 20.66H43.2" stroke="#cbcbcb" stroke-width="1.0"/><path d="M4.8 23.22H43.2" stroke="#cbcbcb" stroke-width="1.0"/><path d="M4.8 25.78H43.2" stroke="#cbcbcb" stroke-width="1.0"/><path d="M4.8 28.34H43.2" stroke="#cbcbcb" stroke-width="1.0"/><path d="M4.8 30.90H43.2" stroke="#cbcbcb" stroke-width="1.0"/><path d="M4.8 33.46H43.2" stroke="#cbcbcb" stroke-width="1.0"/><path d="M4.8 36.02H43.2" stroke="#cbcbcb" stroke-width="1.0"/><path d="M4.8 38.58H43.2" stroke="#cbcbcb" stroke-width="1.0"/><path d="M4.8 41.14H43.2" stroke="#cbcbcb" stroke-width="1.0"/><path d="M4.8 43.70H43.2" stroke="#cbcbcb" stroke-width="1.0"/><path d="M4.8 46.26H43.2" stroke="#cbcbcb" stroke-width="1.0"/><path d="M4.8 48.82H43.2" stroke="#cbcbcb" stroke-width="1.0"/><path d="M4.8 51.38H43.2" stroke="#cbcbcb" stroke-width="1.0"/><path d="M4.8 53.94H43.2" stroke="#cbcbcb" stroke-width="1.0"/><path d="M4.8 56.50H43.2" stroke="#cbcbcb" stroke-width="1.0"/><path d="M4.8 59.06H43.2" stroke="#cbcbcb" stroke-width="1.0"/><path d="M34.2 0L48.2 13.4H35.4Q34.2 13.4 34.2 12.2Z" fill="url(#gf300)"/></svg>
<span id="t35" class="t" style="left:289.00px;top:163.50px;font-size:7.9px;color:#f2f2f2;line-height:12px;transform:scaleX(0.9861);">【永久地址发布页】</span>
<span id="t36" class="t" style="left:318.75px;top:174.50px;font-size:8.9px;color:#f2f2f2;line-height:12px;transform:scaleX(0.9499);">.txt</span>
<div style="position:absolute;left:366px;top:88.75px;width:79.4px;height:87.5px;background:#333333;border-radius:.8px;"></div>
<span id="t37" class="t" style="left:378.75px;top:163.50px;font-size:8.9px;color:#f2f2f2;line-height:12px;transform:scaleX(0.9558);">Marin Niko.zip</span>
<div style="position:absolute;left:447px;top:88.75px;width:79.4px;height:87.5px;background:#333333;border-radius:.8px;"></div>
<span id="t38" class="t" style="left:470.75px;top:163.50px;font-size:8.9px;color:#f2f2f2;line-height:12px;transform:scaleX(0.9315);">MD5.bat</span>
<div style="position:absolute;left:528px;top:88.75px;width:79.4px;height:108.75px;background:#333333;border-radius:.8px;"></div>
<span id="t39" class="t" style="left:532.50px;top:163.50px;font-size:8.9px;color:#f2f2f2;line-height:12px;transform:scaleX(0.8495);">pf_fs_marin_nico_2_</span>
<span id="t40" class="t" style="left:532.00px;top:174.50px;font-size:8.9px;color:#f2f2f2;line-height:12px;transform:scaleX(0.8929);">homemade_101425</span>
<span id="t41" class="t" style="left:545.00px;top:184.80px;font-size:8.9px;color:#f2f2f2;line-height:12px;transform:scaleX(0.8864);">_2160p.mp4</span>
<div style="position:absolute;left:123px;top:198.7px;width:79.4px;height:108.30000000000001px;background:#333333;border-radius:.8px;"></div>
<span id="t42" class="t" style="left:128.70px;top:273.50px;font-size:8.9px;color:#f2f2f2;line-height:12px;transform:scaleX(0.8397);">pf_fs_marin_nico_3_</span>
<span id="t43" class="t" style="left:128.70px;top:284.10px;font-size:8.9px;color:#f2f2f2;line-height:12px;transform:scaleX(0.8811);">darkside_102125_2</span>
<span id="t44" class="t" style="left:145.40px;top:294.60px;font-size:8.9px;color:#f2f2f2;line-height:12px;transform:scaleX(0.8991);">160p.mp4</span>
<div style="position:absolute;left:204px;top:198.7px;width:79.4px;height:119.10000000000002px;background:#333333;border-radius:.8px;"></div>
<span id="t45" class="t" style="left:208.00px;top:273.50px;font-size:8.9px;color:#f2f2f2;line-height:12px;transform:scaleX(0.9036);">Porn Force - 3 Guys</span>
<span id="t46" class="t" style="left:212.40px;top:284.10px;font-size:8.9px;color:#f2f2f2;line-height:12px;transform:scaleX(0.8940);">1 Girl - She Came</span>
<span id="t47" class="t" style="left:209.50px;top:294.60px;font-size:8.9px;color:#f2f2f2;line-height:12px;transform:scaleX(0.9228);">To Europe For This</span>
<span id="t48" class="t" style="left:209.50px;top:305.20px;font-size:8.9px;color:#f2f2f2;line-height:12px;transform:scaleX(0.9411);">- Marin Nico - 21...</span>
<div style="position:absolute;left:285px;top:198.7px;width:79.4px;height:108.30000000000001px;background:#333333;border-radius:.8px;"></div>
<svg style="position:absolute;left:300.5px;top:204.4px;" width="48.2" height="64.8" viewBox="0 0 48.2 64.8"><defs><linearGradient id="gf300" x1="0" y1="1" x2="1" y2="0"><stop offset="0" stop-color="#ffffff"/><stop offset="1" stop-color="#d4d4d4"/></linearGradient></defs><path d="M0 0H34.2L48.2 13.4V64.8H0Z" fill="#fbfbfb"/><path d="M4.8 5.30H34.0" stroke="#cbcbcb" stroke-width="1.0"/><path d="M4.8 7.86H34.0" stroke="#cbcbcb" stroke-width="1.0"/><path d="M4.8 10.42H34.0" stroke="#cbcbcb" stroke-width="1.0"/><path d="M4.8 12.98H34.0" stroke="#cbcbcb" stroke-width="1.0"/><path d="M4.8 15.54H43.2" stroke="#cbcbcb" stroke-width="1.0"/><path d="M4.8 18.10H43.2" stroke="#cbcbcb" stroke-width="1.0"/><path d="M4.8 20.66H43.2" stroke="#cbcbcb" stroke-width="1.0"/><path d="M4.8 23.22H43.2" stroke="#cbcbcb" stroke-width="1.0"/><path d="M4.8 25.78H43.2" stroke="#cbcbcb" stroke-width="1.0"/><path d="M4.8 28.34H43.2" stroke="#cbcbcb" stroke-width="1.0"/><path d="M4.8 30.90H43.2" stroke="#cbcbcb" stroke-width="1.0"/><path d="M4.8 33.46H43.2" stroke="#cbcbcb" stroke-width="1.0"/><path d="M4.8 36.02H43.2" stroke="#cbcbcb" stroke-width="1.0"/><path d="M4.8 38.58H43.2" stroke="#cbcbcb" stroke-width="1.0"/><path d="M4.8 41.14H43.2" stroke="#cbcbcb" stroke-width="1.0"/><path d="M4.8 43.70H43.2" stroke="#cbcbcb" stroke-width="1.0"/><path d="M4.8 46.26H43.2" stroke="#cbcbcb" stroke-width="1.0"/><path d="M4.8 48.82H43.2" stroke="#cbcbcb" stroke-width="1.0"/><path d="M4.8 51.38H43.2" stroke="#cbcbcb" stroke-width="1.0"/><path d="M4.8 53.94H43.2" stroke="#cbcbcb" stroke-width="1.0"/><path d="M4.8 56.50H43.2" stroke="#cbcbcb" stroke-width="1.0"/><path d="M4.8 59.06H43.2" stroke="#cbcbcb" stroke-width="1.0"/><path d="M34.2 0L48.2 13.4H35.4Q34.2 13.4 34.2 12.2Z" fill="url(#gf300)"/></svg>
<span id="t49" class="t" style="left:291.60px;top:273.50px;font-size:7.9px;color:#f2f2f2;line-height:12px;transform:scaleX(0.9248);">最新地址及APP请发</span>
<span id="t50" class="t" style="left:290.80px;top:284.10px;font-size:7.9px;color:#f2f2f2;line-height:12px;transform:scaleX(0.9056);">邮箱自动获取！！！</span>
<span id="t51" class="t" style="left:319.00px;top:294.60px;font-size:8.9px;color:#f2f2f2;line-height:12px;transform:scaleX(0.9034);">.txt</span>
<svg style="position:absolute;left:372.3px;top:99.7px;" width="65.8" height="51.2" viewBox="0 0 65.8 51.2"><defs><linearGradient id="gz" x1="0" y1="0" x2="1" y2="1"><stop offset="0" stop-color="#ffe596"/><stop offset=".55" stop-color="#ffd761"/><stop offset="1" stop-color="#f9c53a"/></linearGradient><linearGradient id="gzt" x1="0" y1="0" x2="0" y2="1"><stop offset="0" stop-color="#f7bd2a"/><stop offset="1" stop-color="#eeac12"/></linearGradient></defs><path d="M0 3Q0 0 3 0H22.5Q25 0 26.4 1.8L29 5.6Q29.8 6.4 31 6.4H62.8Q65.8 6.4 65.8 9.4V30H0Z" fill="url(#gzt)"/><path d="M0 14Q0 11.2 3 11.2H22.8Q25 11.2 26.6 9.6L28.4 7.6Q29.6 6.4 31.4 6.4H62.8Q65.8 6.4 65.8 9.4V48.2Q65.8 51.2 62.8 51.2H3Q0 51.2 0 48.2Z" fill="url(#gz)"/><rect x="-.4" y="28" width="66.6" height="6.2" fill="#b9a98a"/><path d="M11 29.6H59M11 32.6H59" stroke="#5f5646" stroke-width="1.3" stroke-dasharray="1.5 1.2"/><rect x="-.4" y="28" width="11.4" height="6.2" rx="1" fill="#cfcfcf"/><rect x="58.6" y="28" width="7.6" height="6.2" rx="1" fill="#cfcfcf"/><rect x="4.3" y="28.4" width="7.4" height="19.8" rx="1.2" fill="#bfbfbf"/><rect x="5.4" y="29.2" width="5.2" height="4.2" rx=".8" fill="#dedede"/><rect x="6.5" y="43.2" width="3" height="3" rx=".6" fill="#f3cf6a"/></svg>
<svg style="position:absolute;left:449.5px;top:99px;" width="73.4" height="55.4" viewBox="0 0 73.4 55.4"><path d="M0 2Q0 0 2 0H71.4Q73.4 0 73.4 2V3.2H0Z" fill="#808080"/><path d="M0 3H73.4V53.2Q73.4 55.4 71.2 55.4H2.2Q0 55.4 0 53.2Z" fill="#fafafa"/><circle cx="65.4" cy="1.5" r=".55" fill="#bdbdbd"/><circle cx="67.6" cy="1.5" r=".55" fill="#bdbdbd"/><circle cx="69.8" cy="1.5" r=".55" fill="#bdbdbd"/><circle cx="30.9" cy="22.5" r="8.81" fill="#9a9da6"/><rect x="-3.57" y="-11.90" width="7.14" height="7.38" rx="2.02" fill="#9a9da6" transform="translate(30.9 22.5) rotate(0)"/><rect x="-3.57" y="-11.90" width="7.14" height="7.38" rx="2.02" fill="#9a9da6" transform="translate(30.9 22.5) rotate(60)"/><rect x="-3.57" y="-11.90" width="7.14" height="7.38" rx="2.02" fill="#9a9da6" transform="translate(30.9 22.5) rotate(120)"/><rect x="-3.57" y="-11.90" width="7.14" height="7.38" rx="2.02" fill="#9a9da6" transform="translate(30.9 22.5) rotate(180)"/><rect x="-3.57" y="-11.90" width="7.14" height="7.38" rx="2.02" fill="#9a9da6" transform="translate(30.9 22.5) rotate(240)"/><rect x="-3.57" y="-11.90" width="7.14" height="7.38" rx="2.02" fill="#9a9da6" transform="translate(30.9 22.5) rotate(300)"/><circle cx="30.9" cy="22.5" r="3.4" fill="#fafafa"/><circle cx="44.9" cy="39.6" r="6.59" fill="#54575d"/><rect x="-2.67" y="-8.90" width="5.34" height="5.52" rx="1.51" fill="#54575d" transform="translate(44.9 39.6) rotate(0)"/><rect x="-2.67" y="-8.90" width="5.34" height="5.52" rx="1.51" fill="#54575d" transform="translate(44.9 39.6) rotate(60)"/><rect x="-2.67" y="-8.90" width="5.34" height="5.52" rx="1.51" fill="#54575d" transform="translate(44.9 39.6) rotate(120)"/><rect x="-2.67" y="-8.90" width="5.34" height="5.52" rx="1.51" fill="#54575d" transform="translate(44.9 39.6) rotate(180)"/><rect x="-2.67" y="-8.90" width="5.34" height="5.52" rx="1.51" fill="#54575d" transform="translate(44.9 39.6) rotate(240)"/><rect x="-2.67" y="-8.90" width="5.34" height="5.52" rx="1.51" fill="#54575d" transform="translate(44.9 39.6) rotate(300)"/><circle cx="44.9" cy="39.6" r="2.8" fill="#fafafa"/></svg>
<svg style="position:absolute;left:530.8px;top:122.8px;" width="70.7" height="38.2" viewBox="0 0 70.7 38.2"><rect width="70.7" height="38.2" rx="1" fill="#3f3f3f"/><rect x="1.4" y="1.70" width="5" height="4.6" rx="1.1" fill="#f7f7f7"/><rect x="64.30" y="1.70" width="5" height="4.6" rx="1.1" fill="#f7f7f7"/><rect x="1.4" y="9.42" width="5" height="4.6" rx="1.1" fill="#f7f7f7"/><rect x="64.30" y="9.42" width="5" height="4.6" rx="1.1" fill="#f7f7f7"/><rect x="1.4" y="17.14" width="5" height="4.6" rx="1.1" fill="#f7f7f7"/><rect x="64.30" y="17.14" width="5" height="4.6" rx="1.1" fill="#f7f7f7"/><rect x="1.4" y="24.86" width="5" height="4.6" rx="1.1" fill="#f7f7f7"/><rect x="64.30" y="24.86" width="5" height="4.6" rx="1.1" fill="#f7f7f7"/><rect x="1.4" y="32.58" width="5" height="4.6" rx="1.1" fill="#f7f7f7"/><rect x="64.30" y="32.58" width="5" height="4.6" rx="1.1" fill="#f7f7f7"/><svg x="8.2" y="1.6" width="54.300000000000004" height="35.2" viewBox="0 0 54 35" preserveAspectRatio="none" overflow="hidden"><filter id="bl530" x="-10%" y="-10%" width="120%" height="120%"><feGaussianBlur stdDeviation=".55"/></filter><rect width="54" height="35" fill="#070707"/><g filter="url(#bl530)"><ellipse cx="27.4" cy="9.6" rx="6" ry="7" fill="#1c1513"/><path d="M21.6 10Q20.6 16 22.4 19H32.6Q34.2 16 33.2 10Z" fill="#1a1311"/><ellipse cx="27.5" cy="11" rx="3.6" ry="4.5" fill="#a88a7d"/><path d="M22.8 9.6Q24 4.8 27.5 5Q31.2 4.8 32.4 9.6Q30 6.8 28.4 7.6L27 10L26 7.6Q24.6 7 22.8 9.6Z" fill="#18110f"/><path d="M25.6 14.6H29.6V18.6H25.6Z" fill="#987a6d"/><path d="M15.6 35V25Q15.6 19 21.6 18.2L25.4 17.4Q27.6 21 29.8 17.4L33.8 18.2Q39.8 19 39.8 25V35Z" fill="#6b6967"/><path d="M23.2 17.8Q27.6 17 32 17.8L30.4 29Q27.6 33.6 24.8 29Z" fill="#a08377"/><path d="M26.6 24L27.6 31L28.6 24Z" fill="#7a6057"/><path d="M15.6 35V26L18.4 25.4V35ZM37 35V25.4L39.8 26V35Z" fill="#8d7266"/></g></svg><rect x="8.2" y="36.300000000000004" width="54.300000000000004" height=".9" fill="#7d7d7d"/></svg>
<svg style="position:absolute;left:127.2px;top:232.5px;" width="70.7" height="38" viewBox="0 0 70.7 38"><rect width="70.7" height="38" rx="1" fill="#3f3f3f"/><rect x="1.4" y="1.70" width="5" height="4.6" rx="1.1" fill="#f7f7f7"/><rect x="64.30" y="1.70" width="5" height="4.6" rx="1.1" fill="#f7f7f7"/><rect x="1.4" y="9.42" width="5" height="4.6" rx="1.1" fill="#f7f7f7"/><rect x="64.30" y="9.42" width="5" height="4.6" rx="1.1" fill="#f7f7f7"/><rect x="1.4" y="17.14" width="5" height="4.6" rx="1.1" fill="#f7f7f7"/><rect x="64.30" y="17.14" width="5" height="4.6" rx="1.1" fill="#f7f7f7"/><rect x="1.4" y="24.86" width="5" height="4.6" rx="1.1" fill="#f7f7f7"/><rect x="64.30" y="24.86" width="5" height="4.6" rx="1.1" fill="#f7f7f7"/><rect x="1.4" y="32.58" width="5" height="4.6" rx="1.1" fill="#f7f7f7"/><rect x="64.30" y="32.58" width="5" height="4.6" rx="1.1" fill="#f7f7f7"/><svg x="8.2" y="1.6" width="54.300000000000004" height="35.0" viewBox="0 0 54 35" preserveAspectRatio="none" overflow="hidden"><filter id="bl127" x="-10%" y="-10%" width="120%" height="120%"><feGaussianBlur stdDeviation=".55"/></filter><rect width="54" height="35" fill="#070707"/><g filter="url(#bl127)"><path d="M22.6 35Q21.6 20 24.4 9Q26 2 31 2.2Q36.2 2 37.6 9Q40.6 20 39.6 35Z" fill="#1d1312"/><ellipse cx="30.8" cy="10.2" rx="3.9" ry="4.8" fill="#d9bbb0"/><path d="M26.2 9.4Q26.6 3.6 31 3.8Q35.2 3.6 35.6 9.4Q33.4 6.4 31 7Q28.4 6.4 26.2 9.4Z" fill="#170f0e"/><path d="M16.6 35V28Q16.6 22 22 20.8L26.4 20L35.6 20.4L41.4 22Q45.8 23.6 46 28.6V35Z" fill="#d9758a"/><path d="M26.8 35L27.6 21.4Q31 25 34.2 21.4L35.4 35Z" fill="#e4c6bb"/><path d="M27.6 15.2Q29.8 13.2 31.8 15.4L32.4 20.4Q29.8 22.4 27.6 20Z" fill="#e0c0b4"/><path d="M22.6 35Q21.8 25 24.4 14L27 18.6Q25.6 27 26.8 35ZM39.6 35Q39.8 25 37.4 14L35 18.8Q36.4 28 35.4 35Z" fill="#1d1312"/></g></svg><rect x="8.2" y="36.1" width="54.300000000000004" height=".9" fill="#7d7d7d"/></svg>
<svg style="position:absolute;left:207.8px;top:232.5px;" width="70.9" height="38" viewBox="0 0 70.9 38"><rect width="70.9" height="38" rx="1" fill="#3f3f3f"/><rect x="1.4" y="1.70" width="5" height="4.6" rx="1.1" fill="#f7f7f7"/><rect x="64.50" y="1.70" width="5" height="4.6" rx="1.1" fill="#f7f7f7"/><rect x="1.4" y="9.42" width="5" height="4.6" rx="1.1" fill="#f7f7f7"/><rect x="64.50" y="9.42" width="5" height="4.6" rx="1.1" fill="#f7f7f7"/><rect x="1.4" y="17.14" width="5" height="4.6" rx="1.1" fill="#f7f7f7"/><rect x="64.50" y="17.14" width="5" height="4.6" rx="1.1" fill="#f7f7f7"/><rect x="1.4" y="24.86" width="5" height="4.6" rx="1.1" fill="#f7f7f7"/><rect x="64.50" y="24.86" width="5" height="4.6" rx="1.1" fill="#f7f7f7"/><rect x="1.4" y="32.58" width="5" height="4.6" rx="1.1" fill="#f7f7f7"/><rect x="64.50" y="32.58" width="5" height="4.6" rx="1.1" fill="#f7f7f7"/><svg x="8.2" y="1.6" width="54.50000000000001" height="35.0" viewBox="0 0 54 35" preserveAspectRatio="none" overflow="hidden"><filter id="bl207" x="-10%" y="-10%" width="120%" height="120%"><feGaussianBlur stdDeviation=".55"/></filter><rect width="54" height="35" fill="#070707"/><g filter="url(#bl207)"><ellipse cx="26.6" cy="8.6" rx="3.9" ry="4.5" fill="#19120f"/><ellipse cx="26.8" cy="9.8" rx="2.5" ry="3.2" fill="#b99a8d"/><path d="M23.4 8.8Q24.2 4.4 26.8 4.6Q29.8 4.4 30.2 8.8Q28.6 6.8 26.8 7.2Q25 6.8 23.4 8.8Z" fill="#150e0c"/><path d="M25.4 12.6H28.2L28.4 15.4H25.2Z" fill="#ae8d80"/><path d="M12 33Q11.2 24 15.2 18.4Q18.4 14.6 23.8 14.4L26.8 16.4L29.8 14.4Q35.6 14.8 38.8 19Q42.8 24.6 42.6 32L36 34.6H18Z" fill="#e0dcd6"/><path d="M26.8 16.4L26.2 22H27.6Z" fill="#b9b4ad"/><path d="M25 21.4Q26.8 19.4 28.6 21.4L29.8 27.4Q27 30.2 24 27.4Z" fill="#c8a698"/><path d="M18 34.6Q22 30.8 24.2 27.6Q27 30 29.8 27.6Q32 30.8 36 34.6Z" fill="#cdc8c1"/><rect y="30.5" width="54" height="4.5" fill="#0c0c0c" opacity=".5"/></g></svg><rect x="8.2" y="36.1" width="54.50000000000001" height=".9" fill="#7d7d7d"/></svg>
<div style="position:absolute;left:610.5px;top:85px;width:188.3px;height:138px;background:#232323;"></div>
<div style="position:absolute;left:610.5px;top:223px;width:188.3px;height:244.5px;background:#1a1a1a;"></div>
<svg style="position:absolute;left:688.8px;top:123.8px;" width="41.4" height="52.6" viewBox="0 0 41.4 52.6"><defs><linearGradient id="gs1" x1="0" y1="0" x2="1" y2="1"><stop offset="0" stop-color="#43c9f4"/><stop offset="1" stop-color="#2399de"/></linearGradient></defs><rect width="41.4" height="52.6" rx="2.2" fill="url(#gs1)"/></svg>
<svg style="position:absolute;left:685px;top:127.5px;" width="41.6" height="53" viewBox="0 0 41.6 53"><defs><linearGradient id="gs2" x1="0" y1="0" x2="1" y2="1"><stop offset="0" stop-color="#47d0f6"/><stop offset="1" stop-color="#229ce0"/></linearGradient></defs><rect width="41.6" height="53" rx="2.2" fill="url(#gs2)"/></svg>
<div style="position:absolute;left:684.6px;top:130.6px;width:39px;height:50.6px;background:rgba(10,80,140,.2);border-radius:2.4px;"></div>
<svg style="position:absolute;left:681.2px;top:131.2px;" width="41.8" height="53" viewBox="0 0 41.8 53"><defs><linearGradient id="gs3" x1="0" y1="0" x2="1" y2="1"><stop offset="0" stop-color="#45d6f8"/><stop offset="1" stop-color="#1f9fe2"/></linearGradient></defs><rect width="41.8" height="53" rx="2.2" fill="url(#gs3)"/></svg>
<span id="t52" class="t" style="left:624.00px;top:241.00px;font-size:10.2px;color:#ffffff;line-height:14px;font-weight:bold;transform:scaleX(1.0091);">已选择 <span class="L">9</span> 个项目</span>
<div style="position:absolute;left:624px;top:263.8px;width:162px;height:38.8px;background:#1d1d1d;border:1px solid #232323;border-radius:2.5px;"></div>
<span id="t53" class="t" style="left:651.00px;top:273.20px;font-size:8.8px;color:#f0f0f0;line-height:12px;transform:scaleX(0.9742);">选择单个文件以获取详细信息并</span>
<span id="t54" class="t" style="left:651.00px;top:284.40px;font-size:8.8px;color:#f0f0f0;line-height:12px;transform:scaleX(.997);">共享云内容。</span>
<div style="position:absolute;left:452.8px;top:212px;width:193.5px;height:175.5px;background:rgba(0,0,0,.22);border-radius:7px;filter:blur(2.5px);"></div>
<div style="position:absolute;left:455.1px;top:213.7px;width:189.5px;height:170.1px;background:#f0f0f0;border-radius:4.5px;overflow:hidden;box-shadow:0 0 0 .6px #6a6a6a;"><div style="position:absolute;left:0;top:0;width:190px;height:18.9px;background:linear-gradient(#fbf4f0 70%,#f4f0ef)"></div></div>
<svg style="position:absolute;left:459.9px;top:217.1px;" width="10.2" height="9.9" viewBox="0 0 10.2 9.9"><rect x="0" y="0" width="10.2" height="3.5" fill="#b22a3e"/><rect x="0" y="3.3" width="10.2" height="3.4" fill="#5b4bab"/><rect x="0" y="6.5" width="10.2" height="3.3" fill="#2c8c30"/><rect x="0" y="3" width="10.2" height=".5" fill="#7a2650" opacity=".7"/><rect x="0" y="6.4" width="10.2" height=".5" fill="#2a4a6a" opacity=".7"/><rect x="3.9" y="0" width="2.4" height="9.8" fill="#e0852c"/><rect x="3.3" y="3.4" width="3.6" height="2.8" rx=".5" fill="#f2dcb0"/><rect x="4.5" y="4.1" width="1.2" height="1.4" fill="#9a5a1e"/></svg>
<span id="t55" class="t" style="left:473.75px;top:216.60px;font-size:8.6px;color:#111111;line-height:12px;transform:scaleX(0.8472);">正在创建压缩文件 Mari...</span>
<svg style="position:absolute;left:570px;top:222px;" width="6.2" height="1" viewBox="0 0 6.2 1"><path d="M0 .5H6.2" stroke="#222" stroke-width=".8"/></svg>
<svg style="position:absolute;left:598px;top:219.2px;" width="6.6" height="6.6" viewBox="0 0 6.6 6.6"><rect x=".4" y=".4" width="5.8" height="5.8" rx="1" fill="none" stroke="#c9c4c0" stroke-width=".8"/></svg>
<svg style="position:absolute;left:627px;top:219px;" width="6.8" height="6.8" viewBox="0 0 6.8 6.8"><path d="M.3 .3L6.5 6.5M6.5 .3L.3 6.5" stroke="#222" stroke-width=".85"/></svg>
<div style="position:absolute;left:460.2px;top:239.3px;width:178.6px;height:42px;background:#f3f3f3;border:1px solid #dddddd;"></div>
<span id="t56" class="t" style="left:463.75px;top:240.70px;font-size:7.8px;color:#000000;line-height:12px;transform:scaleX(0.8558);">H:\Working\Marin Niko\Marin Niko.zip</span>
<span id="t57" class="t" style="left:463.75px;top:249.50px;font-size:7.8px;color:#000000;line-height:12px;transform:scaleX(0.9609);">正在添加</span>
<span id="t58" class="t" style="left:463.75px;top:258.70px;font-size:7.8px;color:#000000;line-height:12px;transform:scaleX(0.8680);">pf_fs_marin_nico_2_h...de_101425_2160p.mp4</span>
<span id="t59" class="t" style="left:624.25px;top:258.70px;font-size:7.8px;color:#000000;line-height:12px;transform:scaleX(0.9086);">4%</span>
<div style="position:absolute;left:463.7px;top:269.5px;width:171.4px;height:8px;background:#e6e6e6;border:1px solid #bcbcbc;"></div>
<div style="position:absolute;left:464.6px;top:270.4px;width:4.6px;height:6.2px;background:#0d8f2a;"></div>
<div style="position:absolute;left:460.2px;top:288.2px;width:178.6px;height:56.4px;background:#f3f3f3;border:1px solid #dddddd;"></div>
<span id="t60" class="t" style="left:463.75px;top:289.90px;font-size:7.8px;color:#000000;line-height:12px;transform:scaleX(0.9609);">已用时间</span>
<span id="t61" class="t" style="left:607.00px;top:289.90px;font-size:7.8px;color:#000000;line-height:12px;transform:scaleX(0.9223);">00:00:03</span>
<span id="t62" class="t" style="left:463.75px;top:298.70px;font-size:7.8px;color:#000000;line-height:12px;transform:scaleX(0.9609);">剩余时间</span>
<span id="t63" class="t" style="left:607.00px;top:298.70px;font-size:7.8px;color:#000000;line-height:12px;transform:scaleX(0.9223);">00:03:55</span>
<div style="position:absolute;left:461px;top:309.8px;width:176.8px;height:1px;background:#a8a8a8;"></div>
<span id="t64" class="t" style="left:463.75px;top:312.00px;font-size:7.8px;color:#000000;line-height:12px;transform:scaleX(0.9479);">压缩率</span>
<span id="t65" class="t" style="left:619.50px;top:312.00px;font-size:7.8px;color:#000000;line-height:12px;transform:scaleX(0.9610);">99%</span>
<span id="t66" class="t" style="left:463.75px;top:321.20px;font-size:7.8px;color:#000000;line-height:12px;transform:scaleX(0.9531);">进度</span>
<span id="t67" class="t" style="left:624.50px;top:321.20px;font-size:7.8px;color:#000000;line-height:12px;transform:scaleX(0.8864);">1%</span>
<div style="position:absolute;left:463.7px;top:332px;width:171.4px;height:8px;background:#e6e6e6;border:1px solid #bcbcbc;"></div>
<div style="position:absolute;left:464.6px;top:332.9px;width:1.5px;height:6.2px;background:#0d8f2a;"></div>
<div style="position:absolute;left:461.25px;top:350.5px;width:86.25px;height:12.800000000000011px;background:#f2f8fe;border:1px solid #0067c0;border-radius:2.5px;"></div>
<span id="t68" class="t" style="left:492.00px;top:352.00px;font-size:7.6px;color:#000000;line-height:12px;transform:scaleX(0.8856);">后台<span class="L">(B)</span></span>
<div style="position:absolute;left:551.75px;top:350.5px;width:85.75px;height:12.800000000000011px;background:#fdfdfd;border:1px solid #d3d3d3;border-radius:2.5px;"></div>
<span id="t69" class="t" style="left:582.00px;top:352.00px;font-size:7.6px;color:#000000;line-height:12px;transform:scaleX(0.8929);">暂停<span class="L">(P)</span></span>
<div style="position:absolute;left:461.25px;top:367.5px;width:86.25px;height:11.800000000000011px;background:#fdfdfd;border:1px solid #d3d3d3;border-radius:2.5px;"></div>
<span id="t70" class="t" style="left:497.00px;top:368.40px;font-size:7.6px;color:#000000;line-height:12px;transform:scaleX(0.9562);">取消</span>
<div style="position:absolute;left:551.75px;top:367.5px;width:40.75px;height:11.800000000000011px;background:#fdfdfd;border:1px solid #d3d3d3;border-radius:2.5px;"></div>
<span id="t71" class="t" style="left:555.00px;top:368.40px;font-size:7.6px;color:#000000;line-height:12px;transform:scaleX(0.9440);">模式<span class="L">(M)...</span></span>
<div style="position:absolute;left:596.75px;top:367.5px;width:40.75px;height:11.800000000000011px;background:#fdfdfd;border:1px solid #d3d3d3;border-radius:2.5px;"></div>
<span id="t72" class="t" style="left:609.30px;top:368.40px;font-size:7.6px;color:#000000;line-height:12px;transform:scaleX(0.9563);">帮助</span>
</div>
</body>
</html>
